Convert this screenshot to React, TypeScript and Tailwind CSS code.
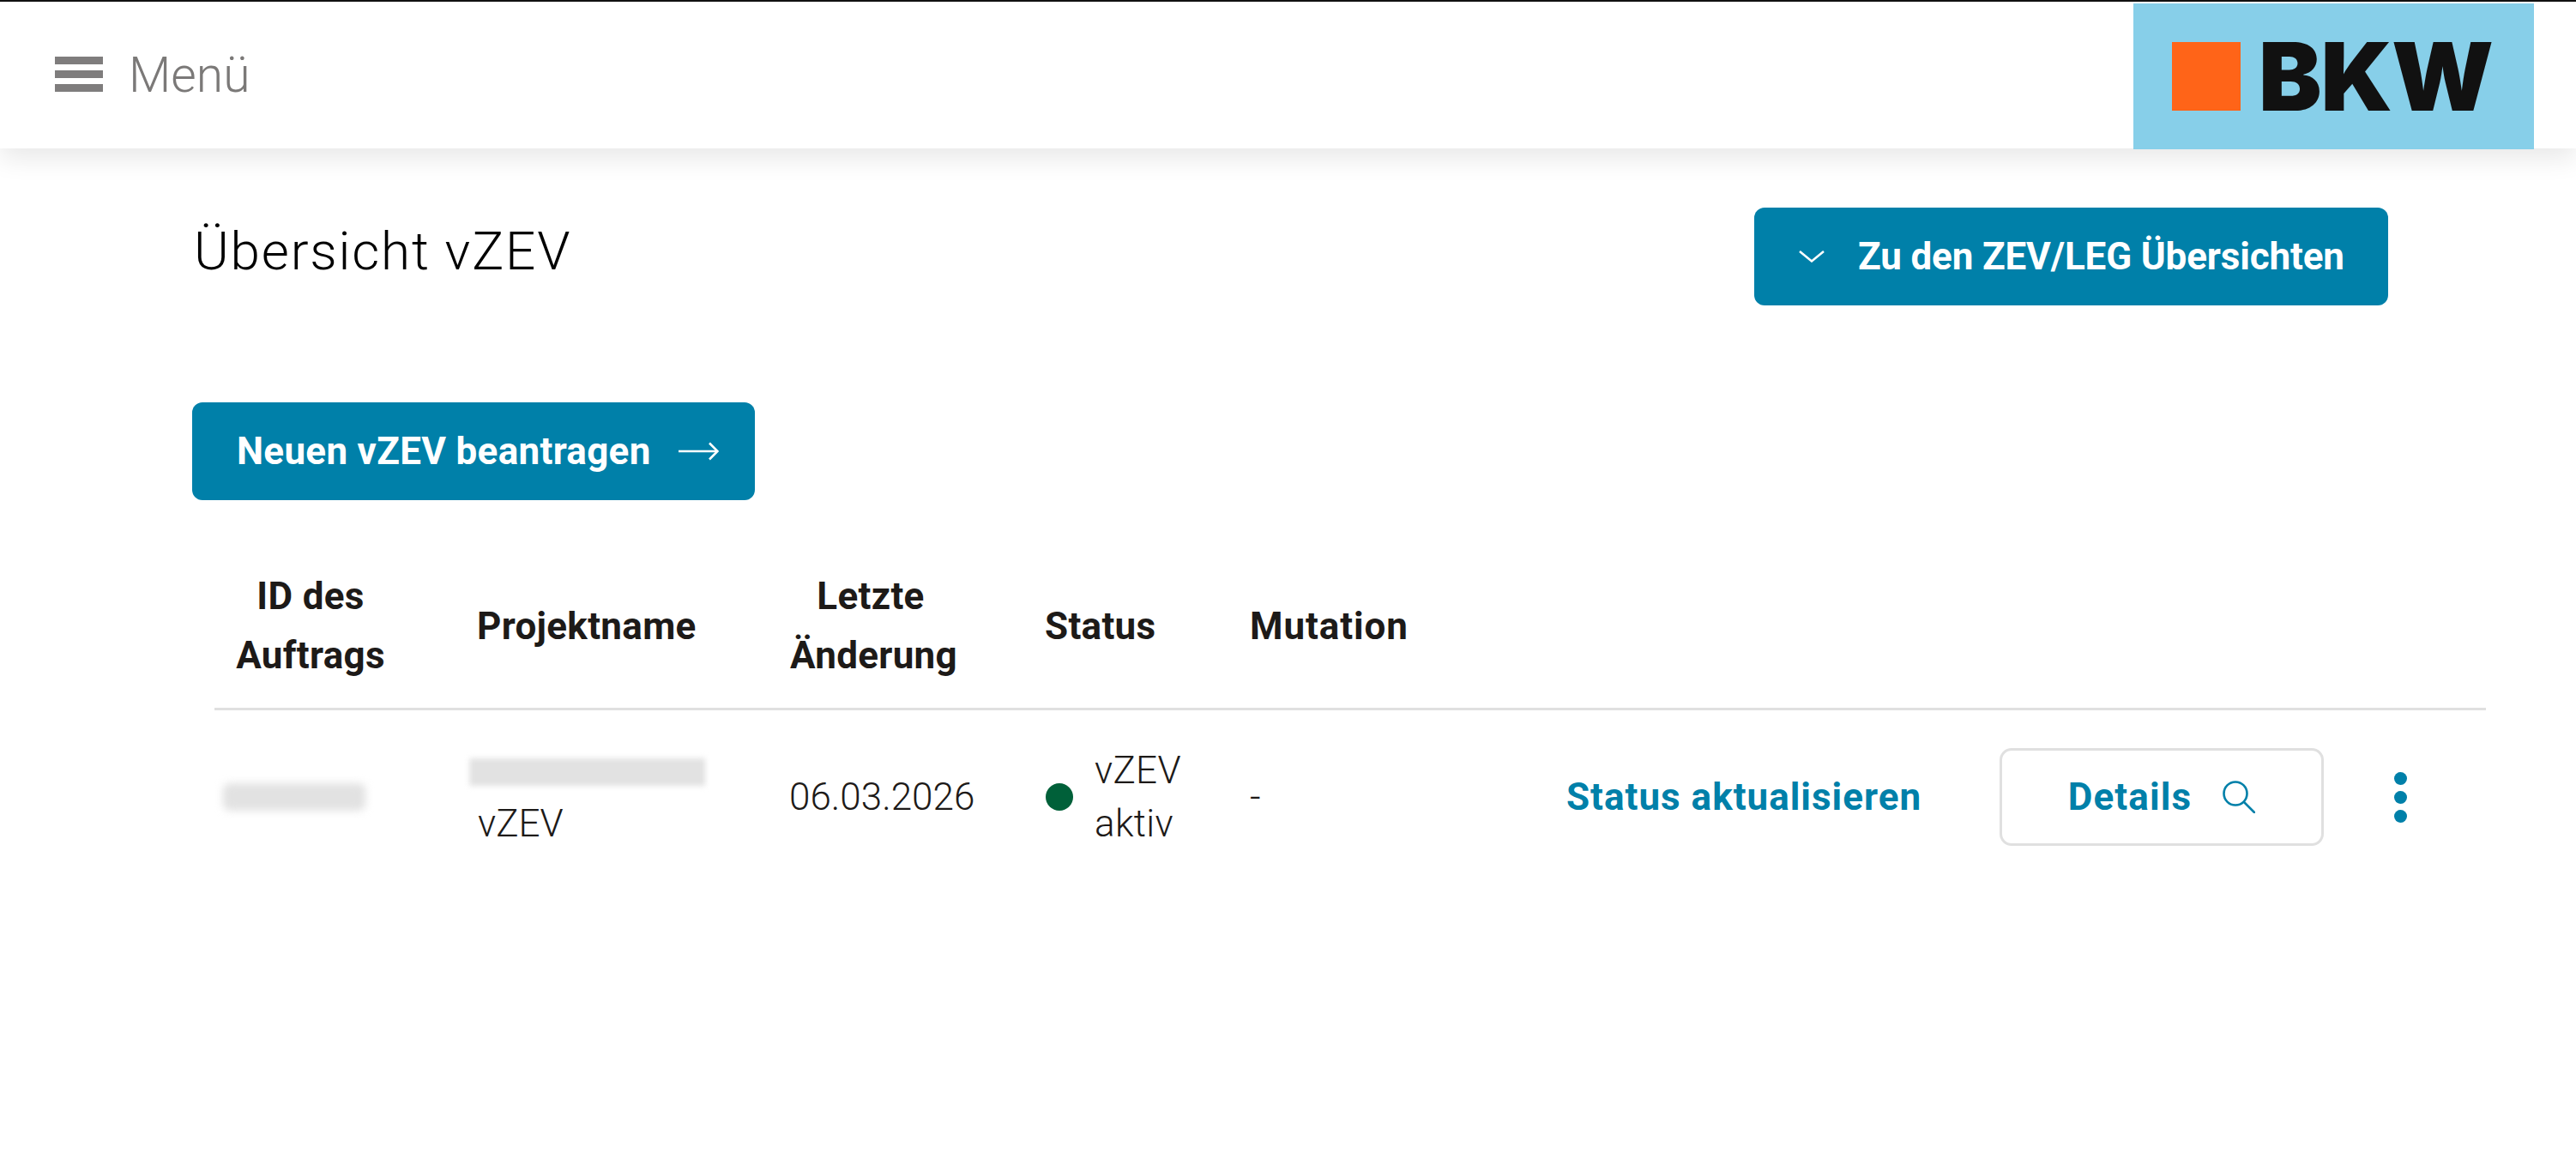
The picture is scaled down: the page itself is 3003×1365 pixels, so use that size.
const teal = 'bg-[#0080a9]';

function ArrowRight() {
  return (
    <svg width="47" height="22" viewBox="0 0 47 22" fill="none" stroke="currentColor" strokeWidth="2.5">
      <path d="M0 11H45" />
      <path d="M36 1.5L45.5 11L36 20.5" />
    </svg>
  );
}

function ChevronDown() {
  return (
    <svg width="30" height="14" viewBox="0 0 30 14" fill="none" stroke="currentColor" strokeWidth="2.5">
      <path d="M1 1L15 12.5L29 1" />
    </svg>
  );
}

function SearchIcon() {
  return (
    <svg width="38" height="38" viewBox="0 0 38 38" fill="none" stroke="currentColor" strokeWidth="2.6">
      <circle cx="15" cy="15" r="13.5" />
      <path d="M25 25L37 37" strokeLinecap="round" />
    </svg>
  );
}

export default function App() {
  return (
    <div className="min-h-[1365px] bg-white font-['Roboto',sans-serif] text-[#1d1a18]">
      <header className="h-[173px] border-t-2 border-[#111] bg-white shadow-[0_12px_28px_rgba(0,0,0,0.09)] flex items-start justify-between pr-[49px]">
        <button className="flex items-center gap-[30px] pl-[64px] h-[171px] text-[#7b7978]">
          <span className="flex flex-col gap-[7px] mb-[2px]">
            <span className="block w-[56px] h-[9px] bg-[#7f7d7d]" />
            <span className="block w-[56px] h-[9px] bg-[#7f7d7d]" />
            <span className="block w-[56px] h-[9px] bg-[#7f7d7d]" />
          </span>
          <span className="text-[57px] font-light leading-none">Menü</span>
        </button>
        <div className="mt-[2px] w-[467px] h-[170px] bg-[#87cfe9] flex items-center pl-[45px] gap-[21px]">
          <span className="block w-[80px] h-[80px] bg-[#ff6418]" />
          <span className="font-['Inter',sans-serif] font-black text-[110px] leading-[80px] tracking-[-1px] text-[#111]">BKW</span>
        </div>
      </header>

      <main className="pl-[224px] pr-[219px] pt-[69px]">
        <div className="flex items-start justify-between">
          <h1 className="mt-[6px] pl-[2px] text-[62px] leading-[90px] font-light text-black tracking-[1.8px]">Übersicht vZEV</h1>
          <button className={`${teal} w-[739px] h-[114px] rounded-[12px] flex items-center pl-[52px] gap-[39px] text-white text-[44px] font-bold tracking-[-0.15px]`}>
            <ChevronDown />
            <span>Zu den ZEV/LEG Übersichten</span>
          </button>
        </div>

        <button className={`${teal} mt-[113px] w-[656px] h-[114px] rounded-[12px] flex items-center pl-[52px] gap-[32px] text-white text-[44px] font-bold tracking-[0.3px]`}>
          <span>Neuen vZEV beantragen</span>
          <ArrowRight />
        </button>

        <div className="mt-[78px] ml-[26px] w-[2648px] text-[44px]">
          <div className="grid grid-cols-[307px_364px_298px_238px_369px_505px_460px_107px] items-center border-b-[3px] border-[#e0e0e0] pb-[26px] font-bold leading-[69px] tracking-[0.3px]">
            <div className="w-[224px] text-center">ID des<br />Auftrags</div>
            <div className="ml-[-1px]">Projektname</div>
            <div className="w-[188px] text-center">Letzte<br />Änderung</div>
            <div className="ml-[-1px]">Status</div>
            <div className="tracking-[0.9px]">Mutation</div>
          </div>
          <div className="grid grid-cols-[307px_364px_298px_238px_369px_505px_460px_107px] items-center pt-[39px] font-light leading-[62px]">
            <div className="pl-[10px]">
              <div className="w-[166px] h-[32px] rounded-[8px] bg-[repeating-linear-gradient(90deg,#dcdcdc_0px,#dcdcdc_3px,#e8e8e8_3px,#e8e8e8_6px)] blur-[5px]" />
            </div>
            <div>
              <div className="h-[62px] flex items-center">
                <div className="ml-[-9px] mt-[3px] w-[274px] h-[32px] bg-[repeating-linear-gradient(90deg,#d6d6d6_0px,#d6d6d6_3px,#eeeeee_3px,#eeeeee_6px)] blur-[3px]" />
              </div>
              <div>vZEV</div>
            </div>
            <div className="ml-[-1px]">06.03.2026</div>
            <div className="flex items-center gap-[25px]">
              <span className="block w-[32px] h-[32px] rounded-full bg-[#006039]" />
              <span className="tracking-[0.3px]">vZEV<br />aktiv</span>
            </div>
            <div>-</div>
            <div className="text-[#0080a9] font-bold tracking-[1px]">Status aktualisieren</div>
            <div>
              <button className="w-[378px] h-[114px] border-[3px] border-[#e0e0e0] rounded-[14px] flex items-center justify-center gap-[36px] text-[#0080a9] font-bold tracking-[1.1px]">
                <span>Details</span>
                <SearchIcon />
              </button>
            </div>
            <div>
              <button className="flex flex-col gap-[7px]">
                <span className="block w-[15px] h-[15px] rounded-full bg-[#0080a9]" />
                <span className="block w-[15px] h-[15px] rounded-full bg-[#0080a9]" />
                <span className="block w-[15px] h-[15px] rounded-full bg-[#0080a9]" />
              </button>
            </div>
          </div>
        </div>
      </main>
    </div>
  );
}
